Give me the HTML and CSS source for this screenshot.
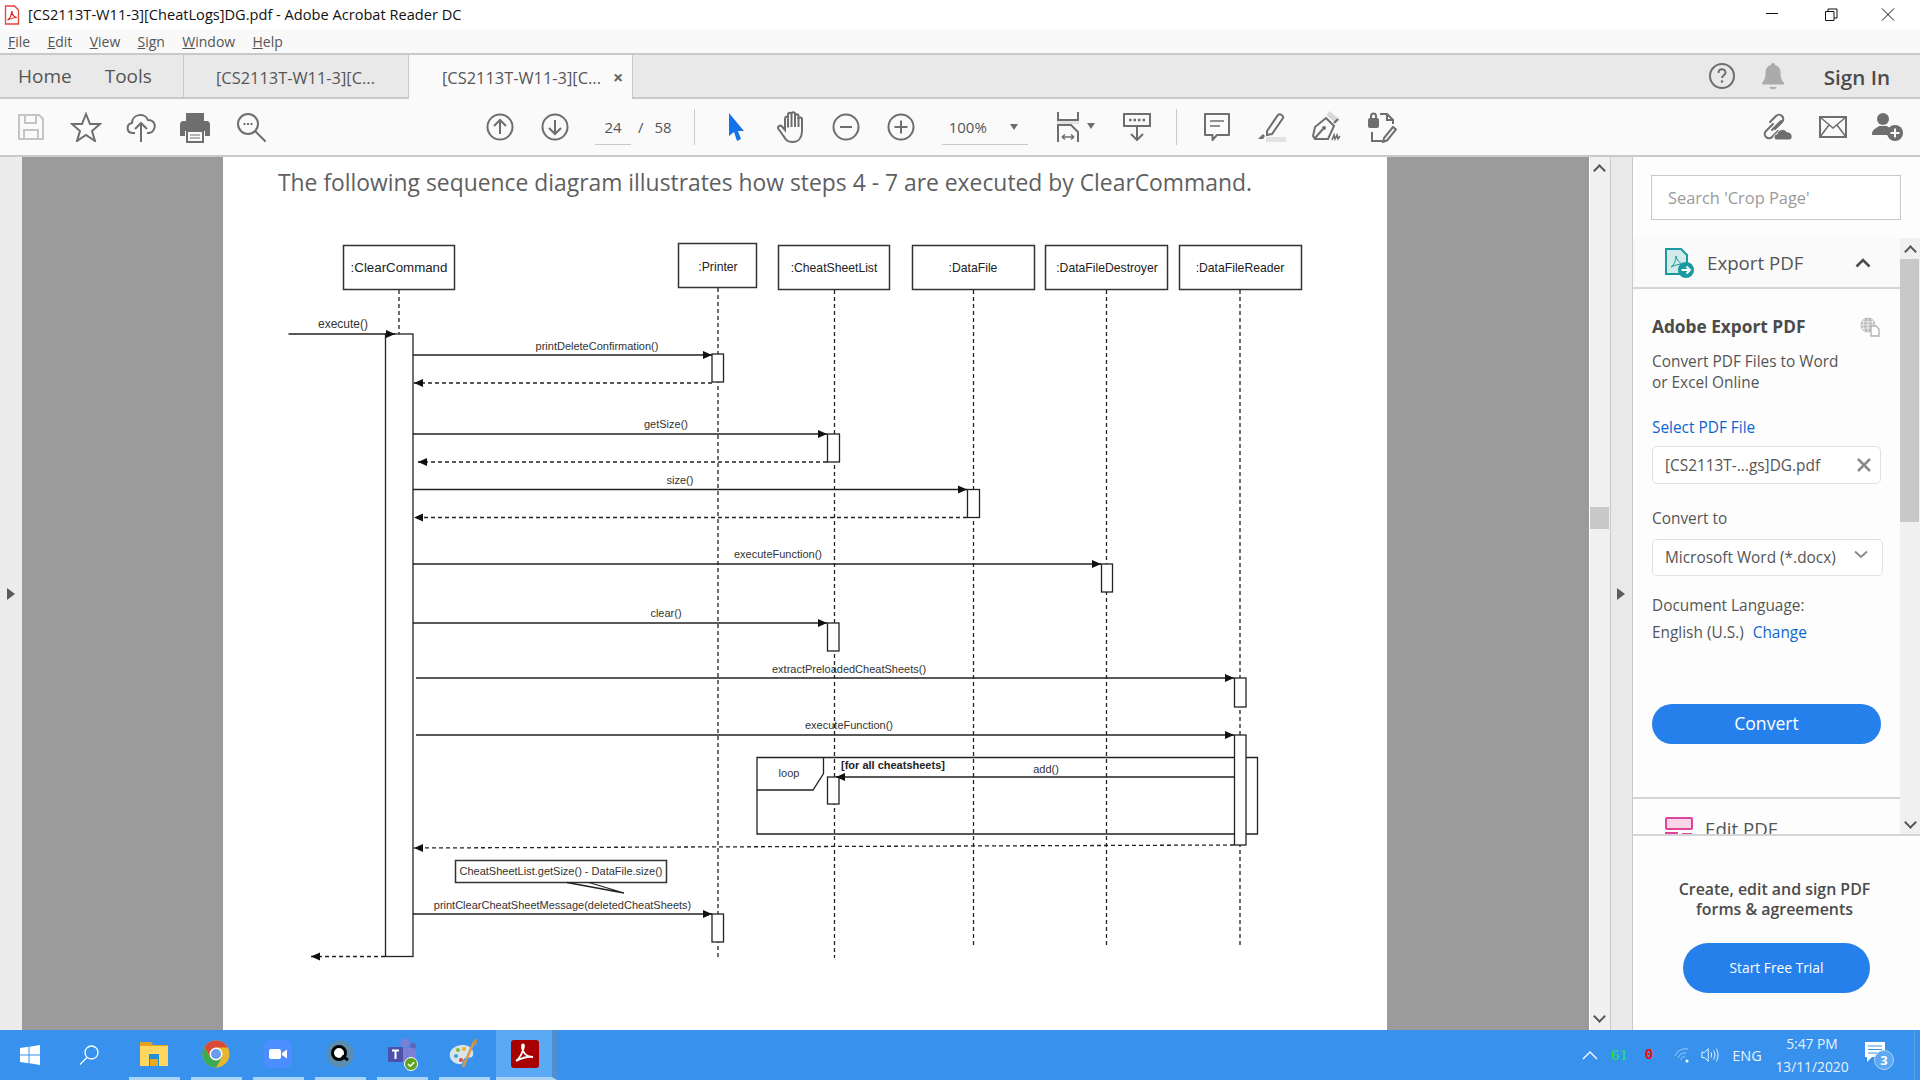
FILE: index.html
```html
<!DOCTYPE html>
<html lang="en">

<head>
    <meta charset="UTF-8">
    <title>[CS2113T-W11-3][CheatLogs]DG.pdf - Adobe Acrobat Reader DC</title>
    <link rel="stylesheet" href="styles.css">
</head>

<body>
    <div class="window">
        <!-- title bar -->
        <div class="titlebar">
            <svg class="pdf-mini" width="16" height="20" viewBox="0 0 16 20">
                <path d="M1.5 1h9l4 4v14h-13z" fill="#fff" stroke="#e2443a" stroke-width="1.3" />
                <path d="M3.5 15c2-1 4-5 4.300-9 .2 3 2 6 5 6.500-3 0-6 1-9.300 2.500z" fill="none" stroke="#d8261c" stroke-width="1.2" />
            </svg>
            <span class="title-text">[CS2113T-W11-3][CheatLogs]DG.pdf - Adobe Acrobat Reader DC</span>
            <div class="winbtns">
                <svg width="58" height="29" viewBox="0 0 58 29"><path d="M23 13.500h12" stroke="#111" fill="none" /></svg>
                <svg width="58" height="29" viewBox="0 0 58 29"><path d="M24.500 11.500h8.500v9h-8.500zM27 11.500v-2.500h9v9h-3" stroke="#111" fill="none" /></svg>
                <svg width="58" height="29" viewBox="0 0 58 29"><path d="M23 8.500l12 12M35 8.500l-12 12" stroke="#111" fill="none" /></svg>
            </div>
        </div>

        <!-- menu -->
        <div class="menubar">
            <span><u>F</u>ile</span>
            <span><u>E</u>dit</span>
            <span><u>V</u>iew</span>
            <span><u>S</u>ign</span>
            <span><u>W</u>indow</span>
            <span><u>H</u>elp</span>
        </div>

        <!-- tabs -->
        <div class="tabbar">
            <div class="nav-tabs">
                <span class="nav-home">Home</span>
                <span class="nav-tools">Tools</span>
            </div>
            <div class="doc-tab">[CS2113T-W11-3][C...</div>
            <div class="doc-tab active">[CS2113T-W11-3][C...<span class="tab-x">×</span></div>
            <div class="tab-right">
                <svg width="30" height="30" viewBox="0 0 30 30">
                    <circle cx="15" cy="15" r="12" class="ln" />
                    <path d="M11.500 12c0-5 7-5 7-.5 0 3-3.500 2.500-3.500 5.500" class="ln" />
                    <circle cx="15" cy="20.500" r="1.300" fill="#6e6e6e" />
                </svg>
                <svg class="bell" width="26" height="28" viewBox="0 0 26 28">
                    <path d="M13 1c1.500 0 2 1 2 2 4 1 5.500 4 5.500 8 0 5 1.500 8 3.500 10v1.500h-22v-1.500c2-2 3.500-5 3.500-10 0-4 1.500-7 5.500-8 0-1 .5-2 2-2z" fill="#ababab" />
                    <path d="M9.500 25h7c-.5 3-6.500 3-7 0z" fill="#ababab" />
                </svg>
                <span class="signin">Sign In</span>
            </div>
        </div>

        <!-- toolbar -->
        <div class="toolbar">
            <div class="tools first">
                <span class="cell"><svg width="30" height="30" viewBox="0 0 30 30">
                        <path d="M3 3h20l4 4v20h-24z" fill="none" stroke="#c4c4c4" stroke-width="2" />
                        <path d="M9 3v8h11v-8M8 27v-9h14v9" fill="none" stroke="#c4c4c4" stroke-width="2" />
                    </svg></span>
                <span class="cell"><svg width="32" height="30" viewBox="0 0 32 30">
                        <path d="M16 2l4 10h10l-8 7 3 10-9-6-9 6 3-10-8-7h10z" class="ln" />
                    </svg></span>
                <span class="cell"><svg width="30" height="32" viewBox="0 0 30 32">
                        <path d="M9 22h-2c-7 0-7-9-1-10 0-9 13-11 16-3 6 0 8 5 6 9-1 3-3 4-6 4h-1" class="ln" />
                        <path d="M15 31v-18M9 18l6-6 6 6" class="ln" />
                    </svg></span>
                <span class="cell print"><svg width="30" height="32" viewBox="0 0 30 32">
                        <path d="M6 2h18v9h-18z" fill="#6e6e6e" />
                        <path d="M3 10h24c1.500 0 3 1.500 3 3v12h-5v-5h-20v5h-5v-12c0-1.500 1.500-3 3-3z" fill="#6e6e6e" />
                        <path d="M7 20h16v11h-16z" fill="#fafafa" stroke="#6e6e6e" stroke-width="2" />
                        <path d="M10 24h10M10 27h10" stroke="#6e6e6e" />
                    </svg></span>
                <span class="cell"><svg width="30" height="30" viewBox="0 0 30 30">
                        <circle cx="12" cy="12" r="10" class="ln" />
                        <path d="M19 19l10 10" class="ln" stroke-linecap="round" />
                        <path d="M7.500 12h2M11 12h2M14.500 12h2" stroke="#6e6e6e" stroke-width="2" />
                    </svg></span>
            </div>

            <div class="tools nav">
                <span class="cell"><svg width="28" height="28" viewBox="0 0 28 28">
                        <circle cx="14" cy="14" r="12.500" class="ln" />
                        <path d="M14 21v-14M8 13l6-6 6 6" class="ln" />
                    </svg></span>
                <span class="cell"><svg width="28" height="28" viewBox="0 0 28 28">
                        <circle cx="14" cy="14" r="12.500" class="ln" />
                        <path d="M14 7v14M8 15l6 6 6-6" class="ln" />
                    </svg></span>
            </div>
            <span class="pagenum">24</span>
            <span class="pageslash">/</span>
            <span class="pagetotal">58</span>
            <span class="tb-sep sep-a"></span>

            <div class="tools select-tools">
                <span class="cell"><svg width="18" height="28" viewBox="0 0 18 28">
                        <path d="M1 0l15 18h-6l3 8-4 2-3-9-5 4z" fill="#1473e6" />
                    </svg></span>
                <span class="cell"><svg width="28" height="32" viewBox="0 0 28 32">
                        <path d="M8 19v-11c0-3 3-3 3-.5v-3.500c0-3 3.500-3 3.500 0v-1c0-2.500 3.500-2.500 3.500 0v2c0-2.500 3.500-2.500 3.500 0v3c0-2 3.500-2 3.500 0v12c0 6-3 11-9.500 11-6 0-7-3-9-6l-5-7c-1.500-2.500 1.500-4.500 3.500-2.500z" class="ln" />
                        <path d="M11 7.500v9M14.500 4v12M18 4v12M21.500 6v10" class="ln" />
                    </svg></span>
                <span class="cell"><svg width="28" height="28" viewBox="0 0 28 28">
                        <circle cx="14" cy="14" r="12.500" class="ln" />
                        <path d="M8 14h12" class="ln" stroke-width="3" />
                    </svg></span>
                <span class="cell"><svg width="28" height="28" viewBox="0 0 28 28">
                        <circle cx="14" cy="14" r="12.500" class="ln" />
                        <path d="M7.500 14h13M14 7.500v13" class="ln" stroke-width="2.500" />
                    </svg></span>
            </div>

            <div class="zoombox">
                <span>100%</span>
                <span class="tri"></span>
            </div>

            <div class="fit">
                <svg width="24" height="30" viewBox="0 0 24 30">
                    <path d="M2 0v8h20v-8" class="ln" />
                    <path d="M1 9h22v3h-22z" fill="#e3e3e3" />
                    <path d="M2 30v-17h13l7 7v10" class="ln" />
                    <path d="M6 25h12M6 25l3-2.500M6 25l3 2.500M18 25l-3-2.500M18 25l-3 2.500" stroke="#6e6e6e" fill="none" stroke-width="1.500" />
                </svg>
                <span class="tri"></span>
            </div>
            <span class="cell kbd"><svg width="28" height="28" viewBox="0 0 28 28">
                    <path d="M1 1h26v12h-26z" class="ln" />
                    <path d="M6 7h2.500M10.500 7h2.500M15 7h2.500M19.500 7h2.500" stroke="#6e6e6e" stroke-width="2.500" />
                    <path d="M14 13v14M8 21l6 6 6-6" class="ln" />
                </svg></span>
            <span class="tb-sep sep-b"></span>

            <div class="tools">
                <span class="cell"><svg width="26" height="28" viewBox="0 0 26 28">
                        <path d="M1 1h24v21h-12l-4.500 5v-5h-7.500z" class="ln" stroke-linejoin="round" />
                        <path d="M6 8h14M6 13h10" stroke="#6e6e6e" stroke-width="1.500" />
                    </svg></span>
                <span class="cell"><svg width="30" height="30" viewBox="0 0 30 30">
                        <path d="M10 19l11-16c2-2 6 1 5 3l-11 16-5 1z" class="ln" />
                        <path d="M8 24l-2 3h-5l5-5z" fill="#6e6e6e" />
                        <path d="M9 25h20v5h-20z" fill="#e2e2e2" />
                    </svg></span>
                <span class="cell"><svg width="30" height="32" viewBox="0 0 30 32">
                        <path d="M16 2l8 7 2-2" fill="none" stroke="#d9d9d9" stroke-width="5" />
                        <path d="M14 7l8 8-6 13h-13l-2-3 2-9zM22 12l4-4M3 27l8-9" class="ln" />
                        <circle cx="12" cy="17" r="2" fill="#6e6e6e" />
                        <path d="M20 29l2-5 1 4 2-4 1 4 2-3" stroke="#6e6e6e" stroke-width="1.500" fill="none" />
                    </svg></span>
                <span class="cell"><svg width="30" height="32" viewBox="0 0 30 32">
                        <rect x="1" y="7" width="11" height="10" rx="2" fill="#6e6e6e" />
                        <path d="M4 8v-3a2.500 2.500 0 0 1 5 0v3" class="ln" />
                        <path d="M13 3h7l6 6v4M20 3v6h6M5 21v9h10" class="ln" />
                        <path d="M18 30l-2 1 1-4 9-11 3 2.500-9 11z" class="ln" stroke-width="1.500" />
                    </svg></span>
            </div>

            <div class="tools right">
                <span class="cell"><svg width="32" height="28" viewBox="0 0 32 28">
                        <path d="M11 11l-7 7c-4 4 2 10 6 6l6-6M13 16l7-7c4-4-2-10-6-6l-6 6M10 17l9-9" class="ln" stroke-linecap="round" />
                        <path d="M15 27c-4 0-4-6 0-6 1-5 8-6 10-2 5-1 8 8 1 8z" fill="#6e6e6e" stroke="#fafafa" />
                    </svg></span>
                <span class="cell"><svg width="28" height="22" viewBox="0 0 28 22">
                        <path d="M1 1h26v20h-26z" class="ln" />
                        <path d="M1 1l13 11 13-11M1 21l9-12M27 21l-9-12" fill="none" stroke="#6e6e6e" stroke-width="1.500" />
                    </svg></span>
                <span class="cell"><svg width="32" height="30" viewBox="0 0 32 30">
                        <circle cx="11" cy="7" r="6" fill="#6e6e6e" />
                        <path d="M0 22c0-5 5-6 7-8h8c2 2 4 3 5 4-2 1-4 2-4 5h-16z" fill="#6e6e6e" />
                        <circle cx="23" cy="21" r="8" fill="#6e6e6e" />
                        <path d="M18.500 21h9M23 16.500v9" stroke="#fafafa" stroke-width="2" />
                    </svg></span>
            </div>
        </div>

        <!-- document + right panel -->
        <div class="main">
            <div class="left-strip"><span class="arrow-r"></span></div>

            <div class="viewer">
                <div class="page">
                    <p class="page-head">The following sequence diagram illustrates how steps 4 - 7 are executed by ClearCommand.</p>
                    <svg class="seq" width="1164" height="810" viewBox="223 220 1164 810">
                        <defs>
                            <marker id="ah" markerUnits="userSpaceOnUse" markerWidth="10" markerHeight="10" refX="9" refY="5" orient="auto">
                                <path d="M0 1l9 4-9 4z" fill="#111" />
                            </marker>
                        </defs>

                        <!-- lifelines -->
                        <path class="life" d="M399 290v44M718 288v670M834.500 290v668M973.500 290v657M1106.500 290v657M1240 290v657" />

                        <!-- heads -->
                        <g class="head">
                            <rect x="343.500" y="245.500" width="111" height="44" />
                            <rect x="678.500" y="243.500" width="78" height="44" />
                            <rect x="778.500" y="245.500" width="111" height="44" />
                            <rect x="912.500" y="245.500" width="122" height="44" />
                            <rect x="1045.500" y="245.500" width="122" height="44" />
                            <rect x="1179.500" y="245.500" width="122" height="44" />
                        </g>
                        <g class="headtxt">
                            <text class="clear-head" x="399" y="272">:ClearCommand</text>
                            <text x="718" y="271">:Printer</text>
                            <text x="834" y="272">:CheatSheetList</text>
                            <text x="973" y="272">:DataFile</text>
                            <text x="1107" y="272">:DataFileDestroyer</text>
                            <text x="1240" y="272">:DataFileReader</text>
                        </g>

                        <!-- loop frame -->
                        <path class="line" d="M757 757.500h500.500v76.500h-500.500zM823.500 757.500v16l-10.500 16.500h-56" />
                        <text class="lbl" x="789" y="777">loop</text>
                        <text class="lbl-b" x="841" y="769">[for all cheatsheets]</text>
                        <text class="lbl" x="1046" y="773">add()</text>

                        <!-- activations -->
                        <g class="act">
                            <rect x="385.500" y="334" width="27.500" height="622.500" />
                            <rect x="712" y="354" width="11.500" height="28" />
                            <rect x="827.500" y="434" width="12" height="28" />
                            <rect x="967.500" y="489.500" width="12" height="28" />
                            <rect x="1101.500" y="564" width="11" height="28" />
                            <rect x="827.500" y="623" width="11.500" height="28" />
                            <rect x="1234.500" y="678" width="11.500" height="29" />
                            <rect x="1234.500" y="735" width="11.500" height="110" />
                            <rect x="827.500" y="777" width="11.500" height="27" />
                            <rect x="712" y="914" width="11.500" height="28" />
                        </g>

                        <!-- messages -->
                        <g class="msg">
                            <path d="M288.500 334H395" />
                            <path d="M413 355H712" />
                            <path d="M413 434H827" />
                            <path d="M413 489.500H967" />
                            <path d="M413 564H1101" />
                            <path d="M413 623H827" />
                            <path d="M416 678H1234" />
                            <path d="M416 735H1234" />
                            <path d="M1234 777H836" />
                            <path d="M413 914H712" />
                        </g>
                        <g class="msg dash">
                            <path d="M712 383H414" />
                            <path d="M827 462H418" />
                            <path d="M967 517.500H414" />
                            <path d="M1234 845L414 848" />
                            <path d="M385 956.500H311" />
                        </g>

                        <g class="lbl">
                            <text class="exec" x="343" y="328">execute()</text>
                            <text x="597" y="350">printDeleteConfirmation()</text>
                            <text x="666" y="428">getSize()</text>
                            <text x="680" y="484">size()</text>
                            <text x="778" y="558">executeFunction()</text>
                            <text x="666" y="617">clear()</text>
                            <text x="849" y="673">extractPreloadedCheatSheets()</text>
                            <text x="849" y="729">executeFunction()</text>
                            <text x="562.500" y="909">printClearCheatSheetMessage(deletedCheatSheets)</text>
                        </g>

                        <!-- note -->
                        <rect class="head" x="455.500" y="860.500" width="211" height="22" />
                        <path class="line" d="M567 882.500l57 10.500-35-10.500" />
                        <text class="lbl" x="561" y="875">CheatSheetList.getSize() - DataFile.size()</text>
                    </svg>
                </div>
            </div>

            <div class="doc-scroll">
                <span class="chev up"></span>
                <span class="doc-thumb"></span>
                <span class="chev down"></span>
            </div>
            <div class="collapse-strip"><span class="arrow-r"></span></div>

            <!-- right panel -->
            <div class="panel">
                <div class="panel-search"><div class="search-box">Search 'Crop Page'</div></div>

                <div class="panel-body">
                    <div class="panel-list">
                        <div class="tool-row">
                            <svg width="30" height="30" viewBox="0 0 30 30">
                                <path d="M1 1h15l6 6v19h-21z" fill="#d2eaea" stroke="#199a9e" stroke-width="2" />
                                <path d="M6 19c3-2 5-6 5-11 1 4 3 7 7 8-4 0-8 1-12 3z" fill="none" stroke="#199a9e" />
                                <circle cx="21" cy="22" r="8" fill="#199a9e" />
                                <path d="M16.500 22h8M21.500 18.500l3.500 3.500-3.500 3.500" stroke="#fff" stroke-width="2" fill="none" />
                            </svg>
                            <span class="tool-name">Export PDF</span>
                            <svg class="tool-chev" width="16" height="10" viewBox="0 0 16 10"><path d="M1.500 8.500l6.500-6.500 6.500 6.500" fill="none" stroke="#4b4b4b" stroke-width="2.500" /></svg>
                        </div>

                        <div class="export">
                            <div class="export-head">
                                <h3>Adobe Export PDF</h3>
                                <svg width="20" height="20" viewBox="0 0 20 20">
                                    <circle cx="8" cy="8" r="7.500" fill="#b9b9b9" />
                                    <path d="M8 .5v15M.5 8h15M2 4c3 1.500 9 1.500 12 0M2 12c3-1.500 9-1.500 12 0M4.500 2c-2 4-2 8 0 12M11.500 2c2 4 2 8 0 12" stroke="#fff" stroke-width=".7" fill="none" />
                                    <path d="M11 9h5l3 3v7h-8z" fill="#fff" stroke="#b0b0b0" stroke-width="1.300" />
                                </svg>
                            </div>
                            <p class="export-desc">Convert PDF Files to Word<br>or Excel Online</p>
                            <a class="blue select-link">Select PDF File</a>
                            <div class="field file-field">
                                <span>[CS2113T-...gs]DG.pdf</span>
                                <svg width="14" height="14" viewBox="0 0 14 14"><path d="M1 1l12 12M13 1l-12 12" stroke="#8a8a8a" stroke-width="2.500" /></svg>
                            </div>
                            <div class="conv-label">Convert to</div>
                            <div class="field conv-field">
                                <span>Microsoft Word (*.docx)</span>
                                <svg width="14" height="9" viewBox="0 0 14 9"><path d="M1 1.500l6 5.500 6-5.500" stroke="#8a8a8a" stroke-width="2" fill="none" /></svg>
                            </div>
                            <div class="lang-label">Document Language:</div>
                            <div class="lang-value">English (U.S.)<a class="blue change">Change</a></div>
                            <div class="btn convert">Convert</div>
                        </div>

                        <div class="tool-row edit-row">
                            <svg width="28" height="30" viewBox="0 0 28 30">
                                <rect x="1" y="1" width="26" height="11" rx="1" fill="#f8d6e8" stroke="#e0439a" stroke-width="2" />
                                <rect x="1" y="16" width="11" height="12" fill="#f8d6e8" stroke="#e0439a" stroke-width="2" />
                                <path d="M17 17h10M17 22h10" stroke="#e0439a" stroke-width="2" />
                            </svg>
                            <span class="tool-name">Edit PDF</span>
                        </div>
                    </div>

                    <div class="panel-scroll">
                        <span class="chev up small"></span>
                        <span class="panel-thumb"></span>
                        <span class="chev down small"></span>
                    </div>
                </div>

                <div class="promo">
                    <p>Create, edit and sign PDF<br>forms &amp; agreements</p>
                    <div class="btn trial">Start Free Trial</div>
                </div>
            </div>
        </div>

        <!-- taskbar -->
        <div class="taskbar">
            <span class="tb-start"><svg width="20" height="20" viewBox="0 0 20 20">
                    <path d="M0 3l8.500-1.200v7.700h-8.500zM9.500 1.700l10.500-1.700v9.500h-10.500zM0 10.500h8.500v7.700l-8.500-1.200zM9.500 10.500h10.500v9.500l-10.500-1.700z" fill="#fff" />
                </svg></span>
            <span class="tb-search"><svg width="20" height="20" viewBox="0 0 20 20">
                    <circle cx="12.500" cy="7.500" r="6.500" fill="none" stroke="#fff" stroke-width="1.300" />
                    <path d="M8 12.500l-7 7" stroke="#fff" stroke-width="1.300" />
                </svg></span>
            <div class="apps">
                <span class="app"><svg width="28" height="26" viewBox="0 0 28 26">
                        <path d="M0 1h11l2 3h15v4h-28z" fill="#e5a21a" />
                        <path d="M0 5h28v20h-28z" fill="#ffd75e" />
                        <path d="M9 13h10v12h-3v-6h-4v6h-3z" fill="#1f8fd8" />
                        <path d="M10 18h8v7h-8z" fill="#e9a91c" />
                    </svg></span>
                <span class="app"><svg width="28" height="32" viewBox="0 0 28 32">
                        <circle cx="14" cy="16" r="13.500" fill="#e4b72f" />
                        <path d="M14 2.500a13.500 13.500 0 0 0-11.700 6.700l6 10.300 5.700-10h12a13.500 13.500 0 0 0-12-7z" fill="#db4a38" />
                        <path d="M2.300 9.200a13.500 13.500 0 0 0 11.700 20.300l6-10.300h-12z" fill="#3da953" />
                        <circle cx="14" cy="16" r="6.500" fill="#fff" />
                        <circle cx="14" cy="16" r="5" fill="#6a9cef" />
                    </svg></span>
                <span class="app"><svg width="28" height="32" viewBox="0 0 28 32">
                        <rect y="2" width="28" height="28" rx="7" fill="#4c8dff" />
                        <rect x="5" y="11" width="12" height="10" rx="2" fill="#fff" />
                        <path d="M18 15l5-3.500v9l-5-3.500z" fill="#fff" />
                    </svg></span>
                <span class="app"><svg width="28" height="32" viewBox="0 0 28 32">
                        <circle cx="14" cy="16" r="13.500" fill="#5b8dae" />
                        <circle cx="13" cy="15" r="6.500" fill="#fff" stroke="#000" stroke-width="3" />
                        <path d="M16 18l6 4" stroke="#000" stroke-width="3" />
                    </svg></span>
                <span class="app"><svg width="32" height="34" viewBox="0 0 32 34">
                        <circle cx="19" cy="6" r="4.500" fill="#7b7fd6" />
                        <circle cx="27" cy="9" r="3" fill="#5f64b8" />
                        <rect x="14" y="11" width="16" height="15" rx="4" fill="#7b7fd6" />
                        <rect x="2" y="10" width="15" height="15" rx="1.500" fill="#4b50a8" />
                        <circle cx="25" cy="27" r="6.500" fill="#5ea21f" stroke="#fff" stroke-width="1" />
                        <path d="M22 27l2.200 2.200 4-4" stroke="#fff" stroke-width="1.500" fill="none" />
                        <path d="M6 13.500h7M9.500 13.500v8.500" stroke="#fff" stroke-width="2" />
                    </svg></span>
                <span class="app"><svg width="30" height="34" viewBox="0 0 30 34">
                        <path d="M1 20c-2-7 6-13 14-12 7 1 10 5 9 10-1 4-5 2-8 3-3 2-1 7-6 6-4 0-8-3-9-7z" fill="#d9e3ea" />
                        <circle cx="7" cy="19" r="2" fill="#3aa5d8" />
                        <circle cx="9" cy="13" r="2" fill="#7cba3a" />
                        <circle cx="15" cy="12" r="2" fill="#e6b428" />
                        <circle cx="12" cy="23" r="2" fill="#d8483c" />
                        <path d="M14 30l11-25" stroke="#d79a4c" stroke-width="2.500" />
                        <path d="M23 7l3-6 2 2-1 6z" fill="#c98e45" />
                    </svg></span>
                <span class="app active"><svg width="28" height="28" viewBox="0 0 28 28">
                        <rect width="28" height="28" rx="3" fill="#a80000" />
                        <path d="M5 21c3-2 7-8 8-15 0-2-2-2-2 0 0 6 4 11 11 11-5-1-11 1-17 4z" fill="none" stroke="#fff" stroke-width="1.800" />
                    </svg></span>
            </div>

            <div class="tray">
                <span class="tray-cell c-chev"><svg width="16" height="9" viewBox="0 0 16 9"><path d="M1 8l7-7 7 7" stroke="#fff" stroke-width="1.300" fill="none" /></svg></span>
                <span class="tray-cell c-up">61</span>
                <span class="tray-cell c-down">0</span>
                <span class="tray-cell c-wifi"><svg width="16" height="16" viewBox="0 0 16 16">
                        <path d="M1 9a11 11 0 0 1 13-7M4 11a7 7 0 0 1 8-5M7 13a3 3 0 0 1 4-3" stroke="#9cc9f5" fill="none" />
                        <circle cx="13" cy="14" r="1.500" fill="#fff" />
                    </svg></span>
                <span class="tray-cell c-vol"><svg width="20" height="16" viewBox="0 0 20 16">
                        <path d="M1 5h3l4-4v14l-4-4h-3z" stroke="#fff" fill="none" />
                        <path d="M11 5c1 2 1 4 0 6M14 3c2 3 2 7 0 10M17 1c2.500 4 2.500 10 0 14" stroke="#fff" fill="none" />
                    </svg></span>
                <span class="tray-cell c-lang">ENG</span>
                <span class="tray-cell c-clock">5:47 PM<br>13/11/2020</span>
                <span class="tray-cell c-notif"><svg width="32" height="32" viewBox="0 0 32 32">
                        <path d="M2 3h20v15h-20z" fill="#fff" />
                        <path d="M5 7h14M5 10.500h14M5 14h9" stroke="#3a92eb" />
                        <path d="M4 18v5l5-5z" fill="#fff" />
                        <circle cx="21" cy="21" r="9.500" fill="#5ea8f0" stroke="#a9d3f7" />
                        <text x="21" y="25.500" class="notif-num">3</text>
                    </svg></span>
                <span class="tray-end"></span>
            </div>
        </div>
    </div>
</body>

</html>
```

FILE: styles.css
```css
* {
    box-sizing: border-box;
}

body {
    margin: 0;
    font-family: "Open Sans", "Noto Sans", sans-serif;
    color: #4b4b4b;
}

.window {
    width: 1920px;
    height: 1080px;
    display: flex;
    flex-direction: column;
    overflow: hidden;
}

.ln {
    fill: none;
    stroke: #6e6e6e;
    stroke-width: 2;
}

/* title bar */
.titlebar {
    height: 29px;
    background: #fff;
    display: flex;
    align-items: center;
    padding-left: 4px;
}

.pdf-mini {
    margin-right: 8px;
}

.title-text {
    font-size: 14.600px;
    color: #111;
    margin-top: -1px;
}

.winbtns {
    margin-left: auto;
    display: flex;
    margin-right: 3px;
}

/* menu */
.menubar {
    height: 26px;
    background: #f9f9f9;
    border-bottom: 2px solid #c9c9c9;
    display: flex;
    align-items: center;
    padding-left: 8px;
    font-size: 14px;
    color: #555;
}

.menubar span {
    margin-right: 17.300px;
}

/* tabs */
.tabbar {
    height: 44px;
    background: #e9e9e9;
    border-bottom: 2px solid #c9c9c9;
    display: flex;
}

.nav-tabs {
    width: 183px;
    display: flex;
    align-items: center;
    font-size: 19px;
    padding-left: 18px;
    color: #555;
}

.nav-tools {
    margin-left: 33px;
}

.doc-tab {
    width: 225px;
    height: 44px;
    border-left: 1px solid #c9c9c9;
    padding-left: 32px;
    display: flex;
    align-items: center;
    font-size: 16.400px;
    color: #555;
}

.doc-tab.active {
    background: #fafafa;
    border-right: 1px solid #c9c9c9;
    position: relative;
    padding-left: 33px;
}

.tab-x {
    margin-left: 12px;
    font-size: 18px;
    font-weight: 700;
    color: #666;
}

.tab-right {
    margin-left: auto;
    display: flex;
    align-items: center;
    padding-right: 30px;
}

.bell {
    margin-left: 23px;
    margin-right: 38px;
}

.signin {
    font-size: 20.600px;
    font-weight: 600;
    color: #4b4b4b;
    padding-top: 2px;
}

/* toolbar */
.toolbar {
    height: 58px;
    background: #fafafa;
    border-bottom: 2px solid #c9c9c9;
    display: flex;
    align-items: center;
}

.tools {
    display: flex;
}

.tools.first {
    margin-left: 3px;
}

.tools.nav {
    margin-left: 194px;
}

.tools.right {
    margin-left: auto;
    margin-right: 5px;
}

.select-tools .cell:nth-child(n+2) {
    position: relative;
    left: -1px;
}

.cell {
    width: 55px;
    display: flex;
    justify-content: center;
    align-items: center;
}

.cell.print {
    padding-right: 2px;
}

.pagenum {
    width: 36px;
    height: 36px;
    margin-left: 13px;
    border-bottom: 1px solid #c9c9c9;
    font-size: 15px;
    line-height: 36px;
    text-align: center;
    color: #555;
}

.pageslash {
    font-size: 15px;
    color: #555;
    margin-left: 7px;
}

.pagetotal {
    font-size: 15px;
    color: #555;
    margin-left: 11px;
}

.tb-sep {
    width: 1px;
    height: 36px;
    background: #c9c9c9;
}

.sep-a {
    margin-left: 22px;
    margin-right: 15px;
}

.sep-b {
    margin-left: 11px;
    margin-right: 13px;
}

.zoombox {
    width: 86px;
    height: 36px;
    margin-left: 12px;
    border-bottom: 1px solid #c9c9c9;
    display: flex;
    align-items: center;
    justify-content: space-between;
    padding: 0 10px 0 7px;
    font-size: 15px;
    color: #555;
}

.tri {
    width: 0;
    height: 0;
    border-left: 4px solid transparent;
    border-right: 4px solid transparent;
    border-top: 6px solid #6e6e6e;
}

.fit {
    margin-left: 28px;
    width: 42px;
    display: flex;
    align-items: center;
    justify-content: space-between;
    padding-right: 3px;
}

.fit .tri {
    margin-bottom: 2px;
}

.kbd {
    margin-left: 12px;
}

/* main area */
.main {
    flex: 1;
    display: flex;
    min-height: 0;
}

.left-strip {
    width: 22px;
    background: #ececec;
    display: flex;
    align-items: center;
    justify-content: center;
}

.arrow-r {
    width: 0;
    height: 0;
    border-top: 6px solid transparent;
    border-bottom: 6px solid transparent;
    border-left: 8px solid #5c5c5c;
}

.viewer {
    width: 1568px;
    background: #9b9b9b;
    padding-left: 201px;
    border-right: 1px solid #fff;
}

.page {
    width: 1164px;
    height: 100%;
    background: #fff;
}

.page-head {
    height: 63px;
    margin: 0;
    padding: 10px 0 0 55px;
    font-size: 22.870px;
    color: #5f5f5f;
    white-space: nowrap;
}

.seq {
    display: block;
    font-family: "Liberation Sans", Arial, sans-serif;
}

.life {
    fill: none;
    stroke: #222;
    stroke-width: 1.300;
    stroke-dasharray: 4 3;
}

.head rect,
rect.head {
    fill: #fff;
    stroke: #333;
    stroke-width: 1.500;
}

.headtxt text {
    font-size: 12.200px;
    text-anchor: middle;
    fill: #222;
}

.headtxt .clear-head {
    font-size: 13.300px;
}

.line {
    fill: none;
    stroke: #222;
    stroke-width: 1.300;
}

.act rect {
    fill: #fff;
    stroke: #222;
    stroke-width: 1.300;
}

.msg path {
    fill: none;
    stroke: #222;
    stroke-width: 1.300;
    marker-end: url(#ah);
}

.msg.dash path {
    stroke-dasharray: 4 3;
}

.lbl,
.lbl text {
    font-size: 11px;
    text-anchor: middle;
    fill: #333;
}

.lbl .exec {
    font-size: 12px;
}

.lbl-b {
    font-size: 11px;
    font-weight: 700;
    fill: #222;
}

.doc-scroll {
    width: 20px;
    background: #f0f0f0;
    position: relative;
    display: flex;
    flex-direction: column;
    align-items: center;
    justify-content: space-between;
    padding: 6px 2px 6px 0;
}

.doc-thumb {
    position: absolute;
    top: 350px;
    left: 0;
    width: 19px;
    height: 22px;
    background: #c8c8c8;
}

.chev {
    width: 9px;
    height: 9px;
    border-left: 2px solid #555;
    border-top: 2px solid #555;
}

.chev.up {
    transform: rotate(45deg);
    margin-top: 3px;
}

.chev.down {
    transform: rotate(225deg);
    margin-bottom: 3px;
}

.collapse-strip {
    width: 23px;
    background: #e9e9e9;
    border-left: 1px solid #c9c9c9;
    border-right: 1px solid #c9c9c9;
    display: flex;
    align-items: center;
    justify-content: center;
    padding-right: 2px;
}

/* right panel */
.panel {
    flex: 1;
    background: #fdfdfd;
    display: flex;
    flex-direction: column;
    min-width: 0;
}

.panel-search {
    height: 81px;
    padding: 18px 19px 0 18px;
}

.search-box {
    height: 45px;
    border: 1px solid #c9c9c9;
    background: #fff;
    padding-left: 16px;
    line-height: 43px;
    font-size: 16.400px;
    color: #9a9a9a;
}

.panel-body {
    height: 598px;
    display: flex;
    border-bottom: 2px solid #d5d5d5;
}

.panel-list {
    width: 267px;
    overflow: hidden;
}

.tool-row {
    height: 51px;
    display: flex;
    align-items: center;
    padding-left: 32px;
    border-bottom: 2px solid #d5d5d5;
    background: #fafafa;
}

.tool-name {
    margin-left: 12px;
    font-size: 18.700px;
    color: #555;
}

.tool-chev {
    margin-left: auto;
    margin-right: 29px;
}

.edit-row {
    border-bottom: 0;
    background: none;
    align-items: flex-start;
    padding-top: 18px;
}

.edit-row .tool-name {
    margin-top: -1px;
}

.export {
    height: 510px;
    padding: 26px 0 0 19px;
    border-bottom: 2px solid #d5d5d5;
    font-size: 15.400px;
    color: #555;
}

.export-head {
    display: flex;
    align-items: center;
    justify-content: space-between;
    padding-right: 20px;
    margin-bottom: 13px;
}

.export-head h3 {
    margin: 0;
    font-size: 17.300px;
    font-weight: 700;
    color: #4b4b4b;
}

.export-desc {
    margin: 0 0 25px;
    line-height: 21px;
}

.blue {
    color: #0d66d0;
}

.select-link {
    display: block;
    line-height: 20px;
    margin-bottom: 8px;
}

.field {
    display: flex;
    align-items: center;
    justify-content: space-between;
    border: 1px solid #e1e1e1;
    border-radius: 5px;
    background: #fff;
    padding: 0 9px 0 12px;
}

.file-field {
    width: 229px;
    height: 38px;
    margin-bottom: 25px;
}

.conv-label {
    line-height: 20px;
    margin-bottom: 10px;
}

.conv-field {
    width: 231px;
    height: 37px;
    margin-bottom: 20px;
    padding-right: 14px;
}

.conv-field svg {
    margin-bottom: 6px;
}

.lang-label {
    line-height: 20px;
    margin-bottom: 7px;
}

.lang-value {
    line-height: 20px;
}

.change {
    margin-left: 9px;
}

.btn {
    background: #2680eb;
    color: #fff;
    text-align: center;
}

.convert {
    width: 229px;
    height: 40px;
    margin-top: 61px;
    border-radius: 20px;
    font-size: 17.600px;
    line-height: 39px;
}

.panel-scroll {
    width: 20px;
    background: #f0f0f0;
    display: flex;
    flex-direction: column;
    align-items: center;
    position: relative;
    padding-top: 6px;
}

.panel-thumb {
    position: absolute;
    top: 21px;
    left: 0;
    width: 19px;
    height: 263px;
    background: #c8c8c8;
}

.chev.small {
    position: absolute;
}

.chev.small.down {
    bottom: 7px;
    margin: 0;
}

.promo {
    flex: 1;
    text-align: center;
}

.promo p {
    margin: 43px 0 24px;
    padding-right: 4px;
    font-size: 15.900px;
    font-weight: 600;
    line-height: 20px;
    color: #4b4b4b;
}

.trial {
    width: 187px;
    height: 50px;
    margin-left: 50px;
    border-radius: 25px;
    font-size: 13.800px;
    line-height: 49px;
}

/* taskbar */
.taskbar {
    height: 50px;
    background: #3891ec;
    display: flex;
    align-items: center;
}

.tb-start {
    width: 60px;
    display: flex;
    justify-content: center;
}

.tb-search {
    width: 58px;
    display: flex;
    justify-content: center;
}

.apps {
    display: flex;
    gap: 11px;
    margin-left: 11px;
    height: 50px;
}

.app {
    width: 51px;
    height: 50px;
    display: flex;
    align-items: center;
    justify-content: center;
    padding-right: 2px;
    border-bottom: 3px solid #a9d3f7;
}

.app.active {
    width: 61px;
    margin-left: -5px;
    padding-left: 2px;
    padding-right: 0;
    background: #5ba9f5;
    border-right: 5px solid #4f8fd0;
}

.tray {
    margin-left: auto;
    display: flex;
    align-items: center;
    height: 50px;
    color: #fff;
}

.tray-cell {
    display: flex;
    justify-content: center;
    align-items: center;
}

.c-chev {
    width: 30px;
}

.c-up {
    width: 30px;
    color: #10ff10;
    font-family: "Liberation Serif", serif;
    font-size: 15px;
    letter-spacing: 1px;
}

.c-down {
    width: 28px;
    color: #ff0000;
    font-family: "Liberation Mono", monospace;
    font-size: 14px;
    font-weight: 700;
}

.c-wifi {
    width: 38px;
}

.c-vol {
    width: 18px;
}

.c-lang {
    width: 56px;
    font-size: 14.500px;
    color: #e6f2fd;
}

.c-clock {
    width: 74px;
    font-size: 13.800px;
    line-height: 23px;
    text-align: center;
    white-space: nowrap;
    color: #e6f2fd;
}

.c-notif {
    width: 60px;
}

.notif-num {
    font-size: 13px;
    font-weight: 700;
    fill: #fff;
    text-anchor: middle;
}

.tray-end {
    width: 1px;
    height: 50px;
    margin-left: 5px;
    margin-right: 5px;
    background: #5c9fe2;
}
```
